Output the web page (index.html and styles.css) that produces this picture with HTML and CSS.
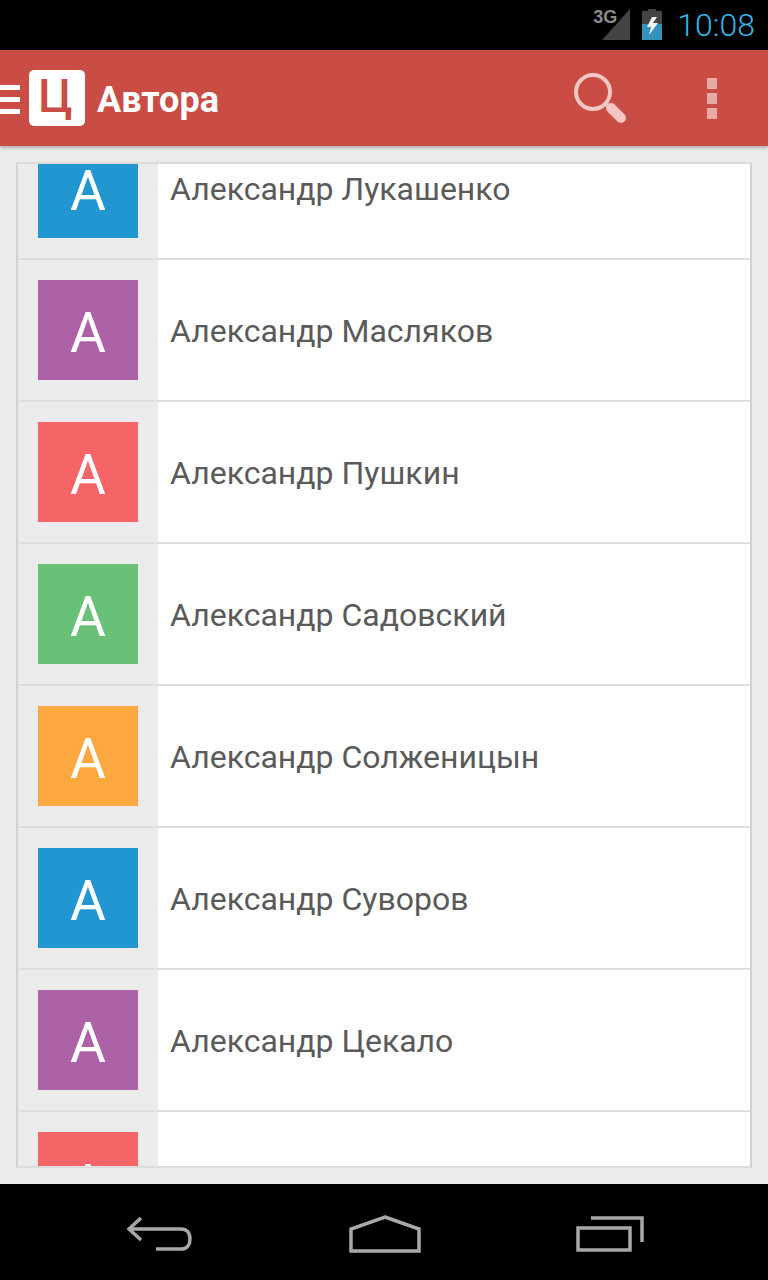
FILE: index.html
```html
<!DOCTYPE html>
<html>
<head>
  <title>Автора</title>
  <link rel="stylesheet" href="styles.css">
</head>
<body>
  <div class="screen">
    <div class="status-bar">
      <div class="signal">
        <span class="signal-label">3G</span>
        <svg class="signal-icon" width="28" height="31" viewBox="0 0 28 31"><path d="M28 0V31H0Z" fill="#444"/></svg>
      </div>
      <svg class="battery" width="20" height="31" viewBox="0 0 20 31">
        <path d="M6 0H14V2H20V31H0V2H6Z" fill="#444"/>
        <path d="M0 15H20V31H0Z" fill="#3393bd"/>
        <path d="M10 8L5 18H9L7 26L16 14H11L15 8Z" fill="#f2f2f2"/>
      </svg>
      <span class="clock">10:08</span>
    </div>

    <div class="app-bar">
      <div class="menu-icon"><span></span><span></span><span></span></div>
      <div class="logo">Ц</div>
      <h1 class="title">Автора</h1>
      <svg class="search-icon" width="56" height="56" viewBox="0 0 56 56">
        <circle cx="23" cy="23" r="17" fill="none" stroke="#f1c6c3" stroke-width="4"/>
        <path d="M36 35L40 39" stroke="#f1c6c3" stroke-width="4"/>
        <path d="M41 39L51 49" stroke="#f1c6c3" stroke-width="10" stroke-linecap="round"/>
      </svg>
      <div class="more-icon"><span></span><span></span><span></span></div>
    </div>

    <div class="content">
      <div class="card">
        <ul class="author-list">
          <li class="author"><div class="thumb-cell"><div class="thumb blue">А</div></div><div class="name">Александр Лукашенко</div></li>
          <li class="author"><div class="thumb-cell"><div class="thumb purple">А</div></div><div class="name">Александр Масляков</div></li>
          <li class="author"><div class="thumb-cell"><div class="thumb red">А</div></div><div class="name">Александр Пушкин</div></li>
          <li class="author"><div class="thumb-cell"><div class="thumb green">А</div></div><div class="name">Александр Садовский</div></li>
          <li class="author"><div class="thumb-cell"><div class="thumb orange">А</div></div><div class="name">Александр Солженицын</div></li>
          <li class="author"><div class="thumb-cell"><div class="thumb blue">А</div></div><div class="name">Александр Суворов</div></li>
          <li class="author"><div class="thumb-cell"><div class="thumb purple">А</div></div><div class="name">Александр Цекало</div></li>
          <li class="author"><div class="thumb-cell"><div class="thumb red">А</div></div><div class="name"></div></li>
        </ul>
      </div>
    </div>

    <div class="nav-bar">
      <svg width="68" height="36" viewBox="0 0 68 36" fill="none" stroke="#a8a8a8" stroke-width="3.500">
        <path d="M15 2L3 13L15 24"/>
        <path d="M3 13H55C61 13 64 17 64 23C64 29 61 33 55 33H30"/>
      </svg>
      <svg width="72" height="38" viewBox="0 0 72 38" fill="none" stroke="#a8a8a8" stroke-width="3.500">
        <path d="M36 2L70 14V36H2V14Z"/>
      </svg>
      <svg width="68" height="36" viewBox="0 0 68 36" fill="none" stroke="#a8a8a8" stroke-width="3.500">
        <path d="M15 2H66V26"/>
        <path d="M2 12H54V34H2Z"/>
      </svg>
    </div>
  </div>
</body>
</html>
```

FILE: styles.css
```css
html, body {
  margin: 0;
  padding: 0;
}

body {
  font-family: Roboto, "Noto Sans", sans-serif;
  background-color: #000;
}

.screen {
  display: flex;
  flex-direction: column;
  width: 768px;
  height: 1280px;
  overflow: hidden;
}

/* status bar */
.status-bar {
  display: flex;
  align-items: center;
  justify-content: flex-end;
  height: 50px;
  flex-shrink: 0;
  box-sizing: border-box;
  padding-right: 13px;
  padding-bottom: 1px;
  background-color: #000;
}

.signal {
  position: relative;
  height: 31px;
  margin-right: 12px;
}

.signal-label {
  position: absolute;
  top: -2px;
  left: -9px;
  font-family: "Liberation Sans Narrow", "Liberation Sans", sans-serif;
  font-size: 18px;
  font-weight: 700;
  color: #8c8c8c;
  white-space: nowrap;
}

.signal-icon {
  display: block;
}

.battery {
  display: block;
  margin-right: 15px;
}

.clock {
  margin-top: 1px;
  font-size: 32px;
  font-weight: 300;
  color: #33b5e5;
}

/* app bar */
.app-bar {
  display: flex;
  align-items: center;
  height: 96px;
  flex-shrink: 0;
  background-color: #c94c45;
  box-shadow: 0 2px 3px rgba(0, 0, 0, 0.25);
  position: relative;
}

.menu-icon {
  display: flex;
  flex-direction: column;
  gap: 7px;
  width: 20px;
  margin-top: 3px;
  margin-right: 9px;
}

.menu-icon span {
  display: block;
  height: 5px;
  background-color: #fff;
}

.logo {
  box-sizing: border-box;
  width: 56px;
  height: 56px;
  padding-right: 3px;
  border-radius: 5px;
  background-color: #fff;
  color: #c94c45;
  font-size: 46px;
  font-weight: 500;
  line-height: 52px;
  text-align: center;
}

.title {
  margin: 4px 0 0 12px;
  font-size: 36px;
  font-weight: 700;
  color: #fff;
}

.search-icon {
  display: block;
  margin-left: auto;
  margin-right: 81px;
  margin-top: -2px;
}

.more-icon {
  display: flex;
  flex-direction: column;
  gap: 4px;
  width: 10px;
  margin-right: 51px;
}

.more-icon span {
  display: block;
  height: 11px;
  background-color: #e9a9a5;
}

/* list */
.content {
  flex: 1;
  padding: 16px 16px 16px;
  background-color: #ebebeb;
}

.card {
  box-sizing: border-box;
  height: 1006px;
  overflow: hidden;
  background-color: #fff;
  border: 2px solid #dcdcdc;
  border-left-color: #d2d2d2;
  border-right-color: #d2d2d2;
}

.author-list {
  margin: -46px 0 0;
  padding: 0;
  list-style: none;
}

.author {
  display: flex;
  height: 142px;
  box-sizing: border-box;
  border-bottom: 2px solid #dedede;
}

.thumb-cell {
  flex-shrink: 0;
  width: 140px;
  padding: 20px;
  box-sizing: border-box;
  background-color: #ebebeb;
}

.thumb {
  width: 100px;
  height: 100px;
  color: #fff;
  font-size: 55px;
  line-height: 106px;
  text-align: center;
}

.thumb.blue { background-color: #2196d1; }
.thumb.purple { background-color: #ad62a7; }
.thumb.red { background-color: #f56467; }
.thumb.green { background-color: #68c177; }
.thumb.orange { background-color: #fca73f; }

.name {
  padding-left: 12px;
  font-size: 32px;
  line-height: 142px;
  color: #5a5a5a;
  white-space: nowrap;
}

/* nav bar */
.nav-bar {
  display: flex;
  align-items: center;
  justify-content: space-between;
  height: 96px;
  flex-shrink: 0;
  box-sizing: border-box;
  padding: 3px 124px 0 126px;
  background-color: #000;
}
```
